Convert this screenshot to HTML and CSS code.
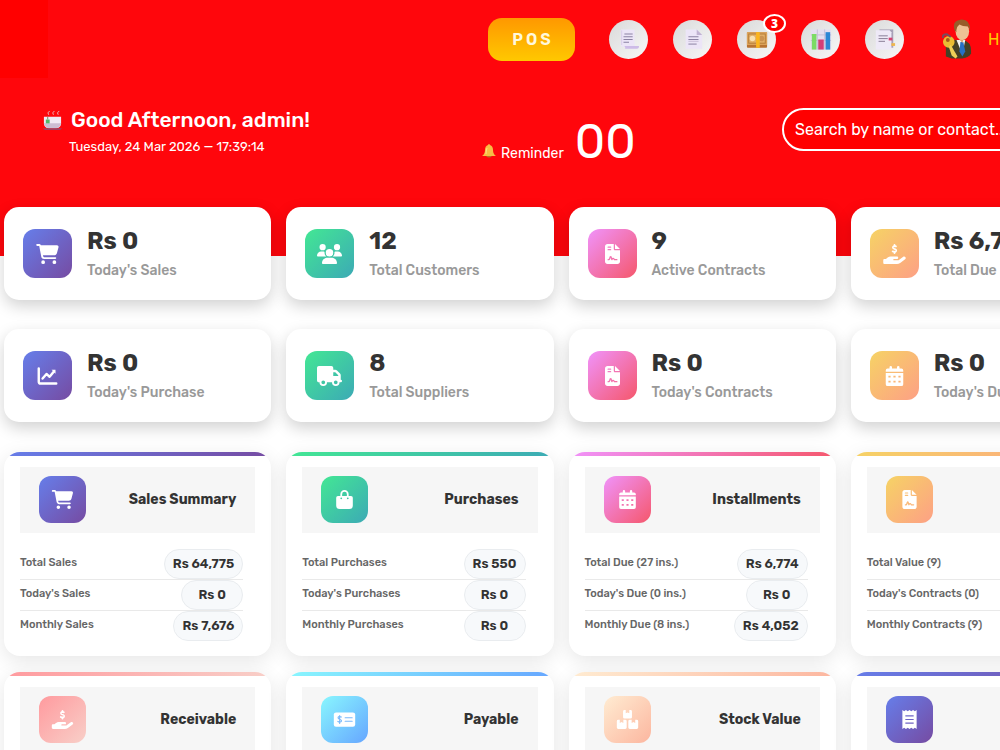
FILE: index.html
```html
<!DOCTYPE html>
<html lang="en">
<head>
<meta charset="utf-8">
<title>Dashboard</title>
<link rel="stylesheet" href="styles.css">
</head>
<body>
<svg class="sprite" aria-hidden="true">
  <symbol id="cart" viewBox="0 0 576 512"><path d="M0 24C0 10.700 10.700 0 24 0H69.500c22 0 41.500 12.800 50.600 32h411c26.300 0 45.500 25 38.600 50.400l-41 152.300c-8.500 31.400-37 53.300-69.500 53.300H170.700l5.400 28.500c2.200 11.300 12.100 19.500 23.600 19.500H488c13.300 0 24 10.700 24 24s-10.700 24-24 24H199.700c-34.600 0-64.300-24.600-70.700-58.500L77.400 54.500c-.7-3.800-4-6.500-7.900-6.500H24C10.700 48 0 37.300 0 24zM128 464a48 48 0 1 1 96 0 48 48 0 1 1-96 0zm336-48a48 48 0 1 1 0 96 48 48 0 1 1 0-96z"/></symbol>
  <symbol id="users" viewBox="0 0 640 512"><path d="M144 0a80 80 0 1 1 0 160A80 80 0 1 1 144 0zM512 0a80 80 0 1 1 0 160A80 80 0 1 1 512 0zM0 298.700C0 239.800 47.800 192 106.700 192h42.700c15.900 0 31 3.500 44.600 9.700-1.300 7.200-1.900 14.700-1.900 22.300 0 38.200 16.800 72.500 43.300 96H21.300C9.600 320 0 310.400 0 298.700zM405.300 320h-.7c26.600-23.500 43.300-57.800 43.300-96 0-7.600-.7-15-1.900-22.300 13.600-6.300 28.700-9.700 44.600-9.700h42.700C592.200 192 640 239.800 640 298.700c0 11.800-9.600 21.300-21.300 21.300H405.300zM224 224a96 96 0 1 1 192 0 96 96 0 1 1-192 0zM128 485.300C128 411.700 187.700 352 261.300 352h117.400C452.300 352 512 411.700 512 485.300c0 14.700-11.900 26.700-26.700 26.700H154.700c-14.700 0-26.700-11.900-26.700-26.700z"/></symbol>
  <symbol id="contract" viewBox="0 0 384 512"><path fill-rule="evenodd" d="M64 0C28.700 0 0 28.700 0 64v384c0 35.300 28.700 64 64 64h256c35.300 0 64-28.700 64-64V160H256c-17.700 0-32-14.300-32-32V0H64zm192 0v128h128L256 0zM80 64h64a16 16 0 0 1 0 32H80a16 16 0 0 1 0-32zm0 64h64a16 16 0 0 1 0 32H80a16 16 0 0 1 0-32zm54.200 253.800c-6.100 20.300-24.800 34.200-46 34.200H80a16 16 0 0 1 0-32h8.200c7.100 0 13.300-4.600 15.300-11.400l14.900-49.500c3.400-11.300 13.800-19.100 25.600-19.100s22.200 7.700 25.600 19.100l11.600 38.600c7.400-6.200 16.800-9.700 26.800-9.700 15.900 0 30.400 9 37.500 23.200l4.400 8.800H304a16 16 0 0 1 0 32h-64c-6.100 0-11.600-3.400-14.300-8.800l-8.800-17.700a10 10 0 0 0-17.800 0l-8.800 17.700a16 16 0 0 1-29.600-2.600L144 354.800l-9.800 27z"/></symbol>
  <symbol id="hand" viewBox="0 0 576 512"><path d="M312 24v10.500c6.400 1.200 12.600 2.700 18.200 4.200 12.800 3.400 20.400 16.600 17 29.400s-16.600 20.400-29.400 17c-10.900-2.900-21.100-4.900-30.200-5-7.300-.1-14.700 1.700-19.400 4.400-10 5.800-6 10.500 0 13.700 5.700 3.300 14.600 5.900 26.900 9.600 36 10.800 66.300 24.200 57 72-4 23-19 36-40 43V232a24 24 0 0 1-48 0v-11.400c-9.500-2.300-18.200-5.300-25.600-7.800l-5.600-1.900c-12.600-4.200-19.400-17.800-15.200-30.400s17.800-19.400 30.400-15.200c28 9.500 59 16 67 2 5-13-13-17-34-23-27-8-54-20-56-55-1-28 15-44 39-54V24a24 24 0 0 1 48 0zM568.200 336.300c13.100 17.800 9.300 42.800-8.500 55.900l-126.600 93.300A144 144 0 0 1 349.800 512H32c-17.700 0-32-14.300-32-32v-64c0-17.700 14.300-32 32-32h36.800l44.900-36a120 120 0 0 1 75-26.300H352a32 32 0 0 1 0 64H272a16 16 0 0 0 0 32h120.600l119.700-88.200c17.800-13.100 42.800-9.300 55.900 8.800z"/></symbol>
  <symbol id="chart" viewBox="0 0 512 512"><path d="M32 64v336q0 48 48 48h400M130 320l100-116 80 72L420 140" fill="none" stroke="currentColor" stroke-width="62" stroke-linecap="round" stroke-linejoin="round"/><path d="M360 96h100v100z"/></symbol>
  <symbol id="truck" viewBox="0 0 640 512"><path fill-rule="evenodd" d="M48 0C21.500 0 0 21.500 0 48v320c0 26.500 21.500 48 48 48h16a96 96 0 0 0 192 0h128a96 96 0 0 0 192 0h32a32 32 0 0 0 0-64V237.300c0-17-6.700-33.300-18.700-45.300L512 114.700A64 64 0 0 0 466.700 96H416V48c0-26.500-21.500-48-48-48H48zm368 160h50.700l77.300 77.300V256H416v-96zM112 416a48 48 0 1 1 96 0 48 48 0 1 1-96 0zm320 0a48 48 0 1 1 96 0 48 48 0 1 1-96 0z"/></symbol>
  <symbol id="calendar" viewBox="0 0 448 512"><path fill-rule="evenodd" d="M128 0a32 32 0 0 1 32 32v32h128V32a32 32 0 0 1 64 0v32h48a48 48 0 0 1 48 48v32H0v-32a48 48 0 0 1 48-48h48V32a32 32 0 0 1 32-32zM0 176h448v288a48 48 0 0 1-48 48H48a48 48 0 0 1-48-48V176zm68 72v48h56v-48H68zm128 0v48h56v-48h-56zm128 0v48h56v-48h-56zM68 376v48h56v-48H68zm128 0v48h56v-48h-56zm128 0v48h56v-48h-56z"/></symbol>
  <symbol id="bag" viewBox="0 0 448 512"><path fill-rule="evenodd" d="M112 160v-48a112 112 0 0 1 224 0v48h64a48 48 0 0 1 48 48v208a96 96 0 0 1-96 96H96a96 96 0 0 1-96-96V208a48 48 0 0 1 48-48h64zm48 0h128v-48a64 64 0 0 0-128 0v48zm-24 88a24 24 0 1 0 0-48 24 24 0 0 0 0 48zm176 0a24 24 0 1 0 0-48 24 24 0 0 0 0 48z"/></symbol>
  <symbol id="check" viewBox="0 0 576 512"><rect y="64" width="576" height="384" rx="60"/><path d="M305 208h190M305 304h190M202 190c-40-22-88-14-88 18 0 48 94 31 94 82 0 36-59 42-100 18M158 150v212" fill="none" stroke="#7ab9fb" stroke-width="30" stroke-linecap="round"/></symbol>
  <symbol id="boxes" viewBox="0 0 576 512"><path d="M208 0h32v90l48-24 48 24V0h32a40 40 0 0 1 40 40v152a40 40 0 0 1-40 40H208a40 40 0 0 1-40-40V40a40 40 0 0 1 40-40zM40 260h40v90l48-24 48 24v-90h50a40 40 0 0 1 40 40v172a40 40 0 0 1-40 40H40a40 40 0 0 1-40-40V300a40 40 0 0 1 40-40zM350 260h50v90l48-24 48 24v-90h40a40 40 0 0 1 40 40v172a40 40 0 0 1-40 40H350a40 40 0 0 1-40-40V300a40 40 0 0 1 40-40z"/></symbol>
  <symbol id="receipt" viewBox="0 0 384 512"><path fill-rule="evenodd" d="M0 0l48 32L96 0l48 32L192 0l48 32L288 0l48 32L384 0v512l-48-32-48 32-48-32-48 32-48-32-48 32-48-32-48 32V0zm80 144v32h224v-32H80zm0 96v32h224v-32H80zm0 96v32h224v-32H80z"/></symbol>
</svg>
<div class="page">
  <header class="topbar">
    <div class="logo"></div>
    <nav class="tools">
      <button class="pos">POS</button>
      <a class="round" href="#" aria-label="Invoices"><svg viewBox="0 0 24 24"><path d="M3 2q0-1 1-1h14v19H5q-2 0-2-2z" fill="#ece5f7"/><path d="M4 2v16" stroke="#d8cde9"/><path d="M7 19h16q0 3-2 3H7q2 0 0-3z" fill="#cdbbe7"/><path d="M7 6h9M6 9h10M6 12h10M6 15h6" stroke="#82789a"/></svg></a>
      <a class="round" href="#" aria-label="Documents"><svg viewBox="0 0 24 24"><path d="M4 1h12l6 6v15H4z" fill="#ece5f7"/><path d="M16 1l6 6h-6z" fill="#c1b3d2"/><path d="M7 9h11M7 12h11M7 17h9" stroke="#82789a"/><path d="M7 14h11" stroke="#c6bbd5"/></svg></a>
      <a class="round" href="#" aria-label="Payments"><svg viewBox="0 0 24 24"><rect x="1" y="4" width="22" height="17" rx="1" fill="#b97432"/><rect x="1" y="4" width="22" height="14" fill="#dca35a"/><rect x="3" y="6" width="18" height="10" fill="#e3b068" stroke="#b37a35"/><circle cx="7" cy="11" r="3" fill="#f8e2b3"/><circle cx="17" cy="11" r="3" fill="#cb9250"/><path d="M11 4h4v17h-4z" fill="#fbb51e"/></svg><span class="badge">3</span></a>
      <a class="round" href="#" aria-label="Reports"><svg viewBox="0 0 24 24"><path d="M1 1h22v22H1z" fill="#e4dff0"/><path d="M1 7h22M1 13h22M8 1v22M16 1v22" stroke="#c3bdd7"/><path d="M2 6h5v17H2z" fill="#7bdc65"/><path d="M9 12h6v11H9z" fill="#d23e77"/><path d="M17 4h5v19h-5z" fill="#2c87d5"/></svg></a>
      <a class="round" href="#" aria-label="Ledger"><svg viewBox="0 0 24 24"><path d="M6 1h15v20H6z" fill="#a7a0b7"/><path d="M2 2h15l2 2v19H2z" fill="#eee9f7"/><path d="M5 8h10M5 11h10M5 14h7" stroke="#81768f"/><path d="M16 10h4v3h-4z" fill="#d54372"/><path d="M19 16h4v3h-4z" fill="#efb64b"/></svg></a>
      <a class="account" href="#">
        <svg viewBox="0 0 32 40"><path d="M4 38V29q0-7 10-8h8q8 2 8 11v3q-2 4-9 5H10z" fill="#454126"/><path d="M15 21h9l-3 15z" fill="#f3f4f4"/><path d="M19 23h3l2 10-3 5-3-5z" fill="#2870c4"/><path d="M16 18h7l-2 6z" fill="#d9a574"/><ellipse cx="21" cy="12" rx="7" ry="9" fill="#eec194"/><path d="M13 11Q10 1 19 0q10-1 10 11l-2-4q-6 0-9-2-4 3-3 8z" fill="#985c29"/><circle cx="7" cy="23" r="6" fill="#e9bc34"/><circle cx="6" cy="21" r="2" fill="#a45a1b"/><path d="M9 26l7 12-2 2-4-3-3-9z" fill="#efcf57"/><path d="M1 19q-1-4 4-4l4 3" fill="none" stroke="#784d5e" stroke-width="2"/></svg>
        <span>Hello, admin</span>
      </a>
    </nav>
  </header>
  <section class="hero">
    <div class="greeting">
      <h1><svg viewBox="0 0 22 22"><path d="M2 7h18v7q0 5-5 5H7q-5 0-5-5z" fill="#f1eaf5"/><path d="M2 14h18q-1 5-5 5H7q-4 0-5-5z" fill="#cdbdd3"/><path d="M1 19h20l-2 2H3z" fill="#9f4060"/><path d="M6 7v3" stroke="#6b8d60"/><path d="M4 10h4v4H4z" fill="#55b769"/><path d="M7 5q-2-2 1-4M12 5q-2-2 1-4M17 5q-2-2 1-4" fill="none" stroke="#e8b9bf"/></svg>Good Afternoon, admin!</h1>
      <p>Tuesday, 24 Mar 2026 — 17:39:14</p>
    </div>
    <div class="reminder"><svg viewBox="0 0 14 14"><path d="M6 1q1-2 2 0 3 1 3 5 0 4 3 6H0q3-2 3-6 0-4 3-5z" fill="#f8bd45"/><path d="M4 12h6q-3 3-6 0z" fill="#b77525"/><path d="M5 4q-1 3-1 6" fill="none" stroke="#ffe080"/></svg><span>Reminder</span><strong>00</strong></div>
    <input class="search" type="search" aria-label="Search" placeholder="Search by name or contact...">
  </section>
  <main>
    <section class="grid stats">
      <article class="stat"><span class="tile violet"><svg><use href="#cart"/></svg></span><div><h2>Rs 0</h2><p>Today's Sales</p></div></article>
      <article class="stat"><span class="tile green"><svg><use href="#users"/></svg></span><div><h2>12</h2><p>Total Customers</p></div></article>
      <article class="stat"><span class="tile pink"><svg><use href="#contract"/></svg></span><div><h2>9</h2><p>Active Contracts</p></div></article>
      <article class="stat"><span class="tile gold"><svg><use href="#hand"/></svg></span><div><h2>Rs 6,774</h2><p>Total Due Ins.</p></div></article>
      <article class="stat"><span class="tile violet"><svg><use href="#chart"/></svg></span><div><h2>Rs 0</h2><p>Today's Purchase</p></div></article>
      <article class="stat"><span class="tile green"><svg><use href="#truck"/></svg></span><div><h2>8</h2><p>Total Suppliers</p></div></article>
      <article class="stat"><span class="tile pink"><svg><use href="#contract"/></svg></span><div><h2>Rs 0</h2><p>Today's Contracts</p></div></article>
      <article class="stat"><span class="tile gold"><svg><use href="#calendar"/></svg></span><div><h2>Rs 0</h2><p>Today's Due</p></div></article>
    </section>
    <section class="grid summaries">
      <article class="summary"><div class="stripe violet"></div><header><span class="tile violet"><svg><use href="#cart"/></svg></span><h3>Sales Summary</h3></header>
        <dl><div><dt>Total Sales</dt><dd>Rs 64,775</dd></div><div><dt>Today's Sales</dt><dd>Rs 0</dd></div><div><dt>Monthly Sales</dt><dd>Rs 7,676</dd></div></dl></article>
      <article class="summary"><div class="stripe green"></div><header><span class="tile green"><svg><use href="#bag"/></svg></span><h3>Purchases</h3></header>
        <dl><div><dt>Total Purchases</dt><dd>Rs 550</dd></div><div><dt>Today's Purchases</dt><dd>Rs 0</dd></div><div><dt>Monthly Purchases</dt><dd>Rs 0</dd></div></dl></article>
      <article class="summary"><div class="stripe pink"></div><header><span class="tile pink"><svg><use href="#calendar"/></svg></span><h3>Installments</h3></header>
        <dl><div><dt>Total Due (27 ins.)</dt><dd>Rs 6,774</dd></div><div><dt>Today's Due (0 ins.)</dt><dd>Rs 0</dd></div><div><dt>Monthly Due (8 ins.)</dt><dd>Rs 4,052</dd></div></dl></article>
      <article class="summary"><div class="stripe gold"></div><header><span class="tile gold"><svg><use href="#contract"/></svg></span><h3>Contracts</h3></header>
        <dl><div><dt>Total Value (9)</dt><dd>Rs 0</dd></div><div><dt>Today's Contracts (0)</dt><dd>Rs 0</dd></div><div><dt>Monthly Contracts (9)</dt><dd>Rs 0</dd></div></dl></article>
      <article class="summary"><div class="stripe rose"></div><header><span class="tile rose"><svg><use href="#hand"/></svg></span><h3>Receivable</h3></header></article>
      <article class="summary"><div class="stripe sky"></div><header><span class="tile sky"><svg><use href="#check"/></svg></span><h3>Payable</h3></header></article>
      <article class="summary"><div class="stripe peach"></div><header><span class="tile peach"><svg><use href="#boxes"/></svg></span><h3>Stock Value</h3></header></article>
      <article class="summary"><div class="stripe violet"></div><header><span class="tile violet"><svg><use href="#receipt"/></svg></span><h3>Expenses</h3></header></article>
    </section>
  </main>
</div>
</body>
</html>
```
FILE: styles.css
```css
* { box-sizing: border-box; }
html, body { overflow: hidden; }
body { margin: 0; height: 100vh; font-family: Rubik, Roboto, sans-serif; background: #fff; color: #333; }
h1, h2, h3, p, dl, dd { margin: 0; }
.sprite { display: none; }
.page { width: 112%; }
.topbar, .hero { background: #ff060c; color: #fff; }
.topbar { display: flex; justify-content: space-between; }
.logo { width: 48px; height: 78px; background: #f00; }
.tools { display: flex; align-items: center; gap: 25px; }
.pos { width: 87px; height: 43px; margin-right: 9px; padding: 0 0 0 3px; border: 0; border-radius: 14px; background: linear-gradient(#ff9800, #ffc800); color: #fff8dc; font: 600 16px Rubik, Roboto, sans-serif; letter-spacing: 3px; }
.round { position: relative; display: grid; place-items: center; width: 39px; height: 39px; border-radius: 50%; background: linear-gradient(135deg, #d9d9d9, #f8f8f8); }
.round svg { width: 22px; height: 23px; }
.badge { position: absolute; top: -6px; right: -10px; width: 23px; height: 19px; border: 2px solid #fff; border-radius: 50%; background: #f00; color: #fff; font: 800 12px/15px "Open Sans", sans-serif; text-align: center; }
.account { display: flex; align-items: center; gap: 15px; width: 178px; margin-left: 13px; color: #ffc800; font-size: 16px; text-decoration: none; }
.account svg { width: 31px; height: 40px; }
.hero { display: grid; grid-template-columns: 440fr 300fr 318fr; align-items: start; height: 178px; padding: 30px 20px 0 42px; }
.greeting h1 { display: flex; align-items: center; gap: 8px; font-size: 21px; line-height: 24px; font-weight: 500; }
.greeting svg { width: 21px; height: 21px; }
.greeting p { margin: 6px 0 0 27px; font-size: 13px; line-height: 18px; }
.reminder { display: flex; align-items: baseline; padding-top: 6px; font-size: 14px; }
.reminder svg { width: 14px; height: 14px; margin-right: 5px; }
.reminder strong { margin-left: 11px; font-size: 48px; line-height: 56px; font-weight: 400; }
.search { width: 100%; height: 43px; padding: 0 11px; border: 2px solid #fff; border-radius: 22px; background: #f00; color: #fff; font: 16px Rubik, Roboto, sans-serif; }
.search::placeholder { color: #fff; opacity: 1; }
main { position: relative; margin-top: -49px; padding: 0 2px 0 4px; }
.grid { display: grid; grid-template-columns: repeat(4, 1fr); column-gap: 15px; }
.stats { row-gap: 29px; margin-bottom: 30px; }
.stat { display: flex; align-items: center; gap: 15px; height: 93px; padding: 0 19px; border-radius: 15px; background: #fff; box-shadow: 0 6px 16px rgba(0, 0, 0, .18); }
.stat h2 { font-size: 24px; line-height: 28px; font-weight: 700; }
.stat p { margin-top: 6px; color: #999; font-size: 14px; line-height: 20px; font-weight: 500; }
.tile { display: grid; place-items: center; flex: none; width: 49px; height: 49px; border-radius: 12px; color: #fff; }
.tile svg { width: 25px; height: 20px; fill: currentColor; }
.summaries { row-gap: 16px; }
.summary { overflow: hidden; border-radius: 16px; background: #fff; padding-bottom: 15px; box-shadow: 0 5px 20px rgba(0, 0, 0, .1); }
.summary header { display: flex; align-items: center; justify-content: space-between; margin: 11px 16px 16px; padding: 9px 19px 10px; background: #f6f6f6; }
.summary .tile { width: 47px; height: 47px; }
.summary .tile svg { height: 19px; }
.summary h3 { font-size: 14px; line-height: 20px; font-weight: 700; }
.stripe { height: 4px; }
.summary dl { padding: 0 28px 0 16px; }
.summary dl div { display: flex; align-items: center; justify-content: space-between; border-bottom: 1px solid #e9e9e9; }
.summary dl div:last-child { border: 0; }
.summary dt { color: #666; font-size: 11px; line-height: 16px; padding-bottom: 3px; font-weight: 500; }
.summary dd { min-width: 62px; height: 30px; padding: 0 8px; border: 1px solid #e9ecef; border-radius: 15px; background: #f7f9fb; font-size: 13px; line-height: 28px; font-weight: 600; text-align: center; }
.violet { background: linear-gradient(135deg, #667eea, #764ba2); }
.green { background: linear-gradient(135deg, #43e794, #3caab5); }
.pink { background: linear-gradient(135deg, #f093fb, #f5576c); }
.gold { background: linear-gradient(135deg, #f6d365, #fda085); }
.rose { background: linear-gradient(135deg, #ff9a9e, #f8cfc8); }
.sky { background: linear-gradient(135deg, #89f7fe, #66a6ff); }
.peach { background: linear-gradient(135deg, #ffecd2, #fcb69f); }
```
